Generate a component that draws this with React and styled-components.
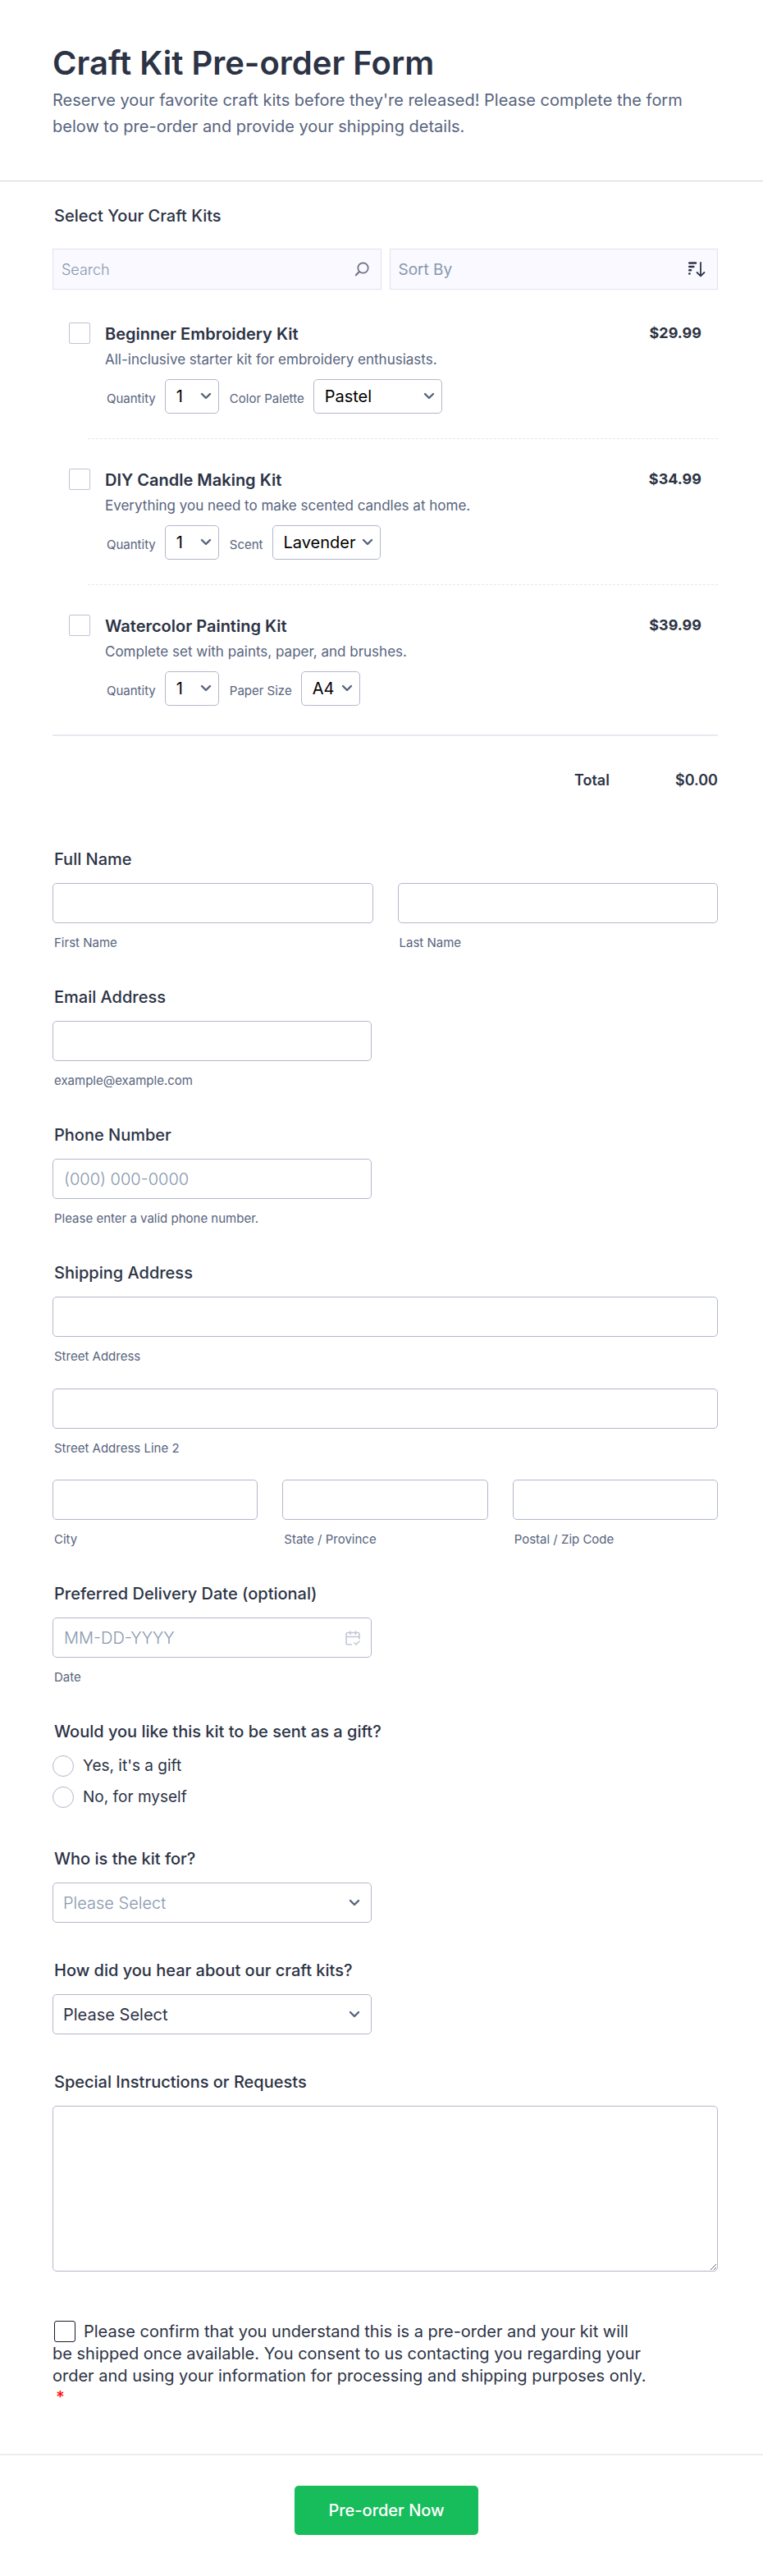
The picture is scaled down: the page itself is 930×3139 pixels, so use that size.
import React from 'react';
import styled, { createGlobalStyle } from 'styled-components';

const GlobalStyle = createGlobalStyle`
  *, *::before, *::after {
    box-sizing: border-box;
  }

  body {
    margin: 0;
    background: #fff;
    color: #2c3345;
    font-family: Inter, 'Liberation Sans', sans-serif;
    font-size: 20px;
  }

  input, select, textarea, button {
    font-family: inherit;
    margin: 0;
  }
`;

const Header = styled.header`
  padding: 52px 64px 50px;
  border-bottom: 1px solid #cfd1de;
`;

const Title = styled.h1`
  margin: 0;
  font-size: 40px;
  line-height: 50px;
  font-weight: 600;
`;

const Subtitle = styled.p`
  margin: 4px 0 0;
  font-size: 20px;
  line-height: 32px;
  color: #57647e;
`;

const Body = styled.div`
  padding: 28px 55px 57px 64px;
`;

const Section = styled.section`
  margin-bottom: ${(p) => p.$gap || 43}px;
`;

const Heading = styled.label`
  display: block;
  margin: 0 0 ${(p) => p.$gap || 15}px;
  padding-left: 2px;
  font-size: 20px;
  line-height: 28px;
  font-weight: 500;
`;

const Toolbar = styled.div`
  display: grid;
  grid-template-columns: 1fr 1fr;
  gap: 10px;
`;

const ToolbarField = styled.div`
  display: flex;
  align-items: center;
  height: 50px;
  padding: 0 14px 0 10px;
  border: 1px solid #dfe3f0;
  background: #f9f9ff;
`;

const SearchInput = styled.input`
  flex: 1;
  min-width: 0;
  padding: 0;
  border: 0;
  outline: 0;
  background: transparent;
  font-size: 18px;
  font-weight: 300;

  &::placeholder {
    color: #8797ad;
    opacity: 1;
  }
`;

const SortSelect = styled.select`
  flex: 1;
  min-width: 0;
  padding: 0;
  border: 0;
  appearance: none;
  background: transparent;
  color: #8797ad;
  font-size: 19px;
`;

const Kits = styled.div`
  padding: 4px 0 5px;
  border-bottom: 2px solid #e9e9f2;
`;

const Product = styled.article`
  display: grid;
  grid-template-columns: 26px 1fr auto;
  column-gap: 18px;
  margin-left: 20px;
  padding: 36px 20px 30px 0;
`;

const Divider = styled.hr`
  margin: 0 0 0 43px;
  border: 0;
  border-top: 1px dashed #e6e6ee;
`;

const CheckBox = styled.input`
  appearance: none;
  flex: none;
  width: 26px;
  height: 26px;
  border: 1px solid ${(p) => (p.$dark ? '#1a1a2b' : '#bfc3d6')};
  border-radius: ${(p) => (p.$dark ? 3 : 2)}px;
  background: #fff;

  &:checked {
    background: #2e69ff;
  }
`;

const ProductName = styled.label`
  display: block;
  font-size: 20px;
  line-height: 28px;
  font-weight: 600;
`;

const ProductText = styled.p`
  margin: 3px 0 10px;
  font-size: 17px;
  line-height: 28px;
  color: #57647e;
`;

const Price = styled.span`
  font-size: 18px;
  line-height: 26px;
  font-weight: 700;
`;

const Options = styled.div`
  display: flex;
  align-items: center;
  gap: 11px;
`;

const OptionLabel = styled.label`
  padding: 4px 0 0 2px;
  font-size: 15px;
  color: #57647e;
`;

const SelectWrap = styled.div`
  display: grid;
  align-items: center;
  width: ${(p) => (p.$width ? `${p.$width}px` : '100%')};

  > * {
    grid-area: 1 / 1;
  }

  > svg {
    justify-self: end;
    margin-right: ${(p) => (p.$width ? 9 : 14)}px;
    pointer-events: none;
  }
`;

const OptionSelect = styled.select`
  appearance: none;
  width: 100%;
  height: 42px;
  padding: 0 13px;
  border: 1px solid #b3b8cb;
  border-radius: 5px;
  background: #fff;
  color: #000;
  font-size: 20px;
`;

const Total = styled.div`
  display: flex;
  justify-content: flex-end;
  gap: 80px;
  padding: 41px 0 69px;
  font-size: 18px;
  line-height: 26px;
  font-weight: 600;
`;

const Row = styled.div`
  display: grid;
  grid-template-columns: repeat(${(p) => p.$columns || 1}, 1fr);
  gap: 30px;
  margin-bottom: ${(p) => p.$gap || 0}px;
`;

const Half = styled.div`
  width: 48%;
`;

const Input = styled.input`
  display: block;
  width: 100%;
  height: 49px;
  padding: 0 13px;
  border: 1px solid #b3b8cb;
  border-radius: 5px;
  background: #fff;
  font-size: 20px;
  font-weight: 300;
  color: #2c3345;

  &::placeholder {
    color: #8797ad;
    opacity: 1;
  }
`;

const Select = styled.select`
  appearance: none;
  width: 100%;
  height: 49px;
  padding: 0 12px;
  border: 1px solid #b3b8cb;
  border-radius: 5px;
  background: #fff;
  font-size: 20px;
  font-weight: ${(p) => (p.$muted ? 300 : 400)};
  color: ${(p) => (p.$muted ? '#8797ad' : '#2c3345')};
`;

const TextArea = styled.textarea`
  display: block;
  width: 100%;
  height: 202px;
  padding: 12px;
  border: 1px solid #b3b8cb;
  border-radius: 5px;
  font-size: 20px;
  resize: vertical;
`;

const SubLabel = styled.label`
  display: block;
  margin-top: 15px;
  padding-left: 2px;
  font-size: 15px;
  line-height: 18px;
  color: #57647e;
`;

const Radios = styled.div`
  display: grid;
  gap: 12px;
`;

const RadioLabel = styled.label`
  display: flex;
  align-items: center;
  gap: 11px;
  font-size: 19px;
  line-height: 26px;
`;

const Radio = styled.input`
  appearance: none;
  width: 26px;
  height: 26px;
  border: 1px solid #b3b8cb;
  border-radius: 50%;

  &:checked {
    border: 8px solid #2e69ff;
  }
`;

const Terms = styled.div`
  max-width: 726px;
  font-size: 20px;
  line-height: 27px;

  input {
    margin: 0 10px 0 2px;
    vertical-align: -6px;
  }
`;

const Required = styled.span`
  display: block;
  padding-left: 4px;
  line-height: 24px;
  font-weight: 600;
  color: #ff1414;
`;

const Footer = styled.footer`
  display: flex;
  justify-content: center;
  padding: 37px 0 50px 12px;
  border-top: 2px solid #ececec;
`;

const Submit = styled.button`
  height: 60px;
  padding: 0 41px;
  border: 0;
  border-radius: 5px;
  background: #18bd5b;
  color: #fff;
  font-size: 20px;
  font-weight: 500;
`;

const kits = [
  {
    id: 'embroidery',
    name: 'Beginner Embroidery Kit',
    text: 'All-inclusive starter kit for embroidery enthusiasts.',
    price: '$29.99',
    option: 'Color Palette',
    values: ['Pastel', 'Bright', 'Neutral'],
    width: 157,
  },
  {
    id: 'candle',
    name: 'DIY Candle Making Kit',
    text: 'Everything you need to make scented candles at home.',
    price: '$34.99',
    option: 'Scent',
    values: ['Lavender', 'Vanilla', 'Citrus'],
    width: 132,
  },
  {
    id: 'watercolor',
    name: 'Watercolor Painting Kit',
    text: 'Complete set with paints, paper, and brushes.',
    price: '$39.99',
    option: 'Paper Size',
    values: ['A4', 'A5'],
    width: 72,
  },
];

function Chevron() {
  return (
    <svg width="14" height="10" viewBox="0 0 14 10" fill="none" aria-hidden="true">
      <path d="M2 2l5 5 5-5" stroke="#57647e" strokeWidth="2.4" strokeLinecap="round" strokeLinejoin="round" />
    </svg>
  );
}

function SearchIcon() {
  return (
    <svg width="18" height="18" viewBox="0 0 18 18" fill="none" stroke="#6c7080" strokeWidth="1.7" strokeLinecap="round" aria-hidden="true">
      <circle cx="10.5" cy="7.5" r="6.2" />
      <path d="M6 12l-4.2 4.200M1.800 16.200l2-2" strokeWidth="2" />
    </svg>
  );
}

function SortIcon() {
  return (
    <svg width="22" height="20" viewBox="0 0 22 20" fill="none" stroke="#2c3345" strokeLinecap="round" strokeLinejoin="round" aria-hidden="true">
      <path d="M2.300 2.500h7.700M2.300 7h5M2.300 11.300h1.700M2.300 15.500h.2" strokeWidth="2.6" />
      <path d="M16 2v16M11.500 14l4.500 4.300 4.500-4.300" strokeWidth="1.8" />
    </svg>
  );
}

function CalendarIcon() {
  return (
    <svg width="18" height="18" viewBox="0 0 18 18" fill="none" stroke="#c3c6d6" strokeWidth="1.6" strokeLinecap="round" strokeLinejoin="round" aria-hidden="true">
      <path d="M7.500 17H3a2 2 0 0 1-2-2V4.500a2 2 0 0 1 2-2h12a2 2 0 0 1 2 2V10M1 7.500h16M6 1v3.500M12.500 1v3.500M11 15l2 2 4-4" />
    </svg>
  );
}

function Field({ id, label, ...rest }) {
  return (
    <div>
      <Input id={id} {...rest} />
      <SubLabel htmlFor={id}>{label}</SubLabel>
    </div>
  );
}

function Kit({ kit }) {
  return (
    <Product>
      <CheckBox type="checkbox" id={kit.id} />
      <div>
        <ProductName htmlFor={kit.id}>{kit.name}</ProductName>
        <ProductText>{kit.text}</ProductText>
        <Options>
          <OptionLabel htmlFor={`${kit.id}-qty`}>Quantity</OptionLabel>
          <SelectWrap $width={66}>
            <OptionSelect id={`${kit.id}-qty`}>
              {[1, 2, 3, 4, 5].map((n) => <option key={n}>{n}</option>)}
            </OptionSelect>
            <Chevron />
          </SelectWrap>
          <OptionLabel htmlFor={`${kit.id}-option`}>{kit.option}</OptionLabel>
          <SelectWrap $width={kit.width}>
            <OptionSelect id={`${kit.id}-option`}>
              {kit.values.map((v) => <option key={v}>{v}</option>)}
            </OptionSelect>
            <Chevron />
          </SelectWrap>
        </Options>
      </div>
      <Price>{kit.price}</Price>
    </Product>
  );
}

function App() {
  return (
    <form onSubmit={(e) => e.preventDefault()}>
      <GlobalStyle />
      <Header>
        <Title>Craft Kit Pre-order Form</Title>
        <Subtitle>
          Reserve your favorite craft kits before they're released! Please complete the form below to pre-order and provide your shipping details.
        </Subtitle>
      </Header>
      <Body>
        <Heading as="h2" $gap={26}>Select Your Craft Kits</Heading>
        <Toolbar>
          <ToolbarField>
            <SearchInput type="text" placeholder="Search" aria-label="Search kits" />
            <SearchIcon />
          </ToolbarField>
          <ToolbarField>
            <SortSelect aria-label="Sort kits">
              <option>Sort By</option>
              <option>Price</option>
              <option>Name</option>
            </SortSelect>
            <SortIcon />
          </ToolbarField>
        </Toolbar>
        <Kits>
          {kits.map((kit, i) => (
            <React.Fragment key={kit.id}>
              {i > 0 && <Divider />}
              <Kit kit={kit} />
            </React.Fragment>
          ))}
        </Kits>
        <Total>
          <span>Total</span>
          <span>$0.00</span>
        </Total>

        <Section>
          <Heading as="h2">Full Name</Heading>
          <Row $columns={2}>
            <Field id="first-name" label="First Name" type="text" />
            <Field id="last-name" label="Last Name" type="text" />
          </Row>
        </Section>
        <Section>
          <Heading as="h2">Email Address</Heading>
          <Half><Field id="email" label="example@example.com" type="email" /></Half>
        </Section>
        <Section>
          <Heading as="h2">Phone Number</Heading>
          <Half><Field id="phone" label="Please enter a valid phone number." type="tel" placeholder="(000) 000-0000" /></Half>
        </Section>
        <Section>
          <Heading as="h2">Shipping Address</Heading>
          <Row $gap={30}><Field id="street" label="Street Address" type="text" /></Row>
          <Row $gap={29}><Field id="street2" label="Street Address Line 2" type="text" /></Row>
          <Row $columns={3}>
            <Field id="city" label="City" type="text" />
            <Field id="state" label="State / Province" type="text" />
            <Field id="zip" label="Postal / Zip Code" type="text" />
          </Row>
        </Section>
        <Section>
          <Heading as="h2">Preferred Delivery Date (optional)</Heading>
          <Half>
            <SelectWrap>
              <Input id="date" type="text" placeholder="MM-DD-YYYY" />
              <CalendarIcon />
            </SelectWrap>
            <SubLabel htmlFor="date">Date</SubLabel>
          </Half>
        </Section>
        <Section $gap={48}>
          <Heading as="h2">Would you like this kit to be sent as a gift?</Heading>
          <Radios>
            <RadioLabel><Radio type="radio" name="gift" />Yes, it's a gift</RadioLabel>
            <RadioLabel><Radio type="radio" name="gift" />No, for myself</RadioLabel>
          </Radios>
        </Section>
        <Section $gap={44}>
          <Heading htmlFor="who">Who is the kit for?</Heading>
          <Half>
            <SelectWrap>
              <Select id="who" $muted>
                <option>Please Select</option>
                <option>Myself</option>
                <option>Someone else</option>
              </Select>
              <Chevron />
            </SelectWrap>
          </Half>
        </Section>
        <Section $gap={44}>
          <Heading htmlFor="heard">How did you hear about our craft kits?</Heading>
          <Half>
            <SelectWrap>
              <Select id="heard">
                <option>Please Select</option>
                <option>Social media</option>
                <option>A friend</option>
              </Select>
              <Chevron />
            </SelectWrap>
          </Half>
        </Section>
        <Section $gap={60}>
          <Heading htmlFor="notes">Special Instructions or Requests</Heading>
          <TextArea id="notes" />
        </Section>
        <Terms>
          <CheckBox $dark type="checkbox" id="terms" required />
          <label htmlFor="terms">
            Please confirm that you understand this is a pre-order and your kit will be shipped once available. You consent to us contacting you regarding your order and using your information for processing and shipping purposes only.
          </label>
          <Required>*</Required>
        </Terms>
      </Body>
      <Footer>
        <Submit type="submit">Pre-order Now</Submit>
      </Footer>
    </form>
  );
}

export default App;
